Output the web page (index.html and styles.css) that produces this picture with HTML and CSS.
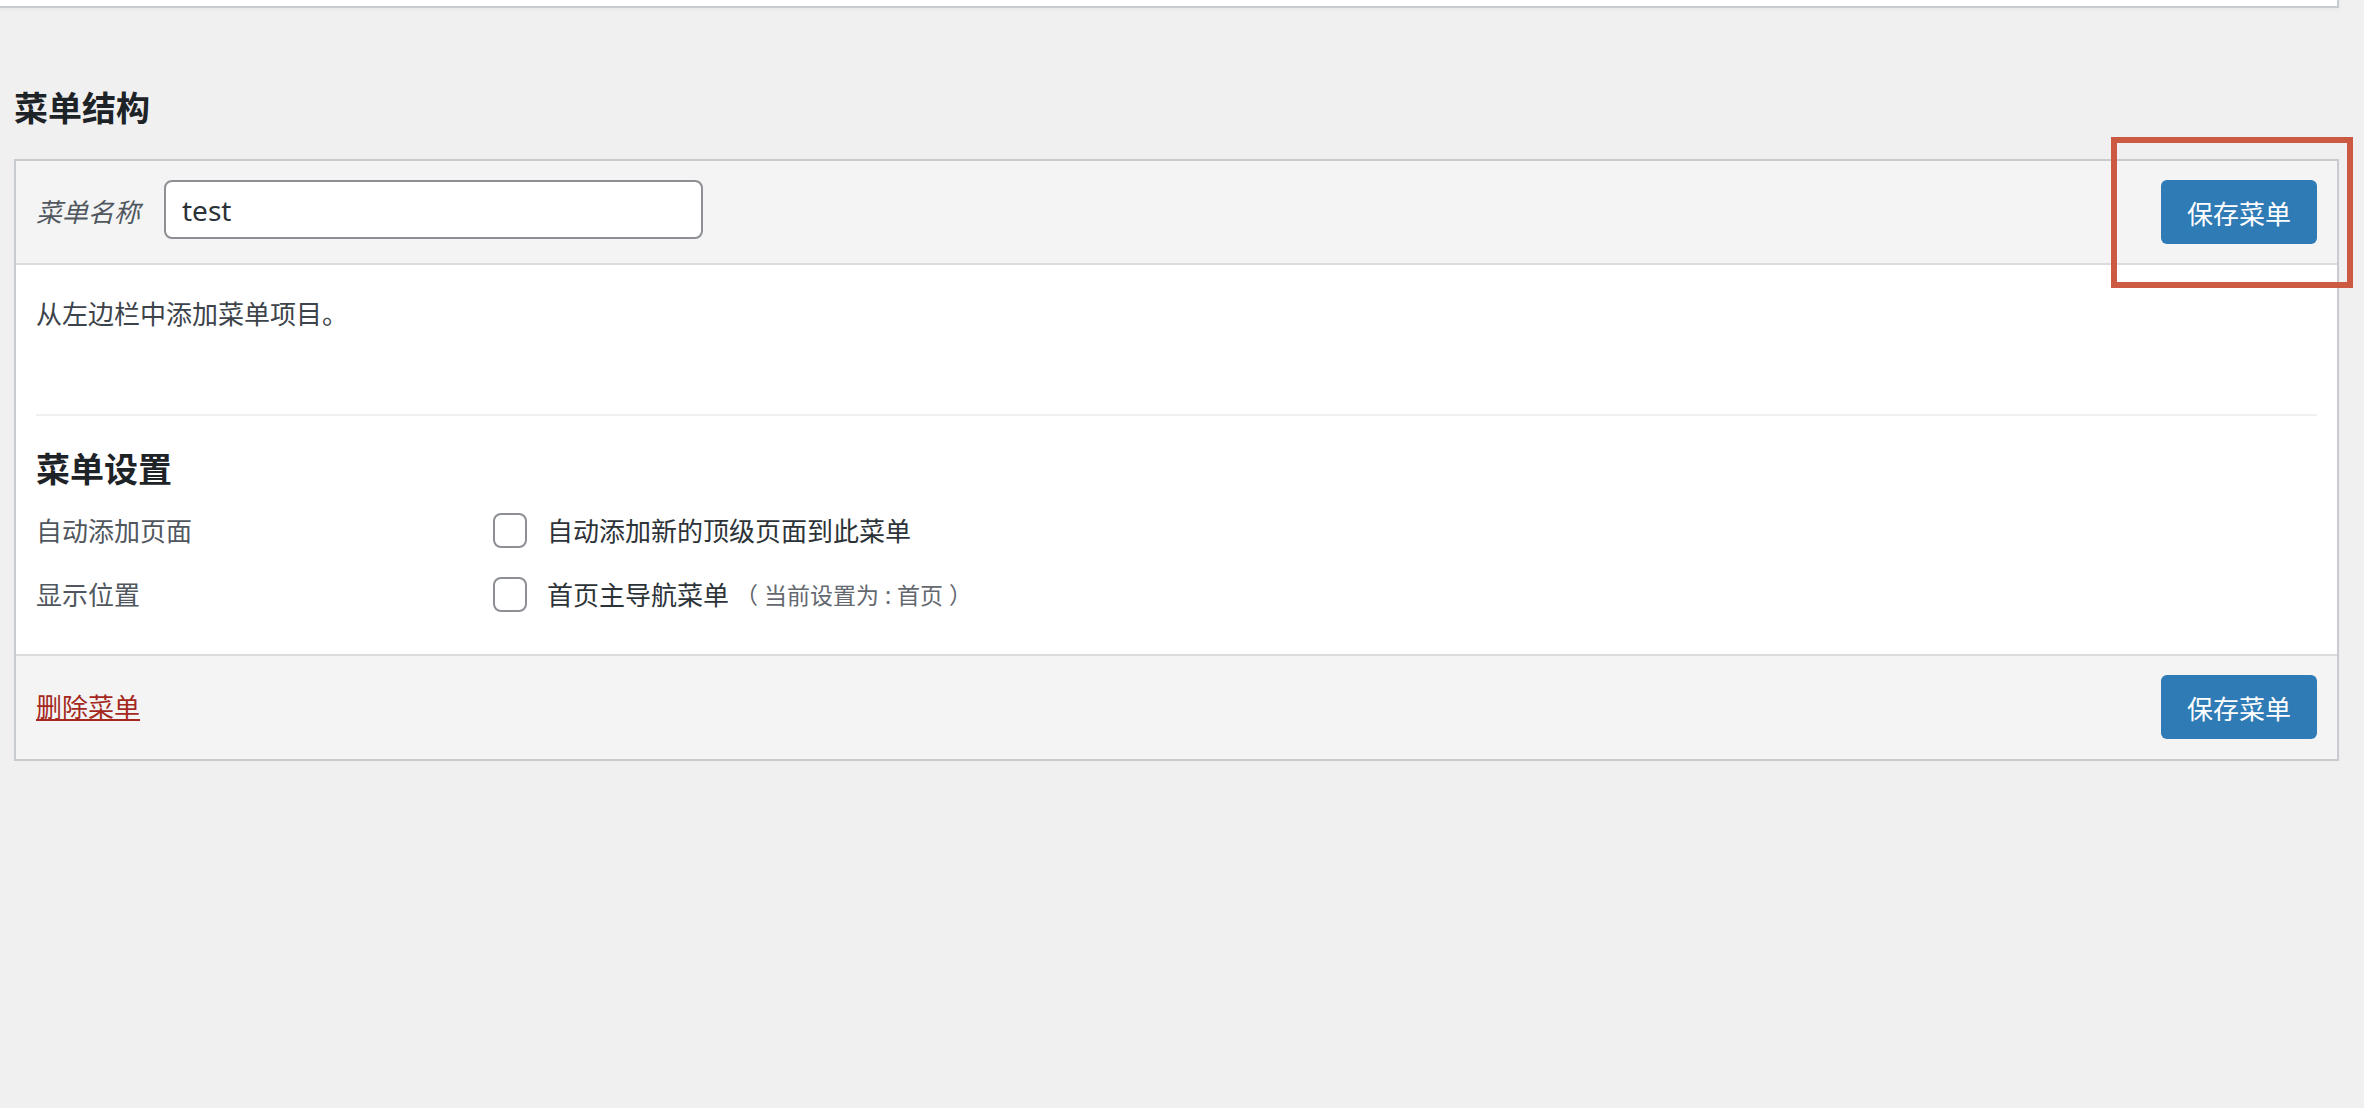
FILE: index.html
```html
<!DOCTYPE html>
<html lang="zh-CN">
    <head>
        <meta charset="utf-8">
        <title>菜单结构</title>
        <link rel="stylesheet" href="styles.css">
    </head>
    <body>
        <div class="page">
            <div class="top-panel"></div>

            <h2 class="section-title">菜单结构</h2>

            <div class="menu-box">
                <div class="menu-header">
                    <label class="name-label" for="menu-name">菜单名称</label>
                    <input type="text" id="menu-name" class="name-input" value="test">
                    <button class="btn-primary">保存菜单</button>
                </div>

                <div class="menu-body">
                    <p class="instructions">从左边栏中添加菜单项目。</p>

                    <div class="settings">
                        <h3 class="settings-title">菜单设置</h3>
                        <div class="setting-row">
                            <span class="setting-name">自动添加页面</span>
                            <label class="setting-check">
                                <input type="checkbox" class="checkbox">
                                自动添加新的顶级页面到此菜单
                            </label>
                        </div>
                        <div class="setting-row">
                            <span class="setting-name">显示位置</span>
                            <label class="setting-check">
                                <input type="checkbox" class="checkbox">
                                首页主导航菜单
                                <span class="location-set">（ 当前设置为 : 首页 ）</span>
                            </label>
                        </div>
                    </div>
                </div>

                <div class="menu-footer">
                    <a href="#" class="delete-link">删除菜单</a>
                    <button class="btn-primary">保存菜单</button>
                </div>
            </div>
        </div>

        <!-- markierung um den oberen button -->
        <div class="highlight"></div>
    </body>
</html>
```

FILE: styles.css
```css
:root {
    --bg-clr: #f0f0f1;
    --panel-clr: #f4f4f4;
    --border-clr: #c8ccd0;
    --inner-border-clr: #dcdcde;
    --text-clr: #3c434a;
    --heading-clr: #1d2327;
    --blue-clr: #2f7bb5;
    --red-clr: #a4281d;
}

body {
    margin: 0;
    background-color: var(--bg-clr);
    color: var(--text-clr);
    font-family: "Noto Sans", "Noto Sans CJK SC", sans-serif;
    font-size: 26px;
    line-height: 1.4;
}

.page {
    padding: 0 25px 0 14px;
}

.top-panel {
    height: 6px;
    margin-left: -14px;
    background: #fff;
    border-bottom: 2px solid var(--border-clr);
    border-right: 2px solid var(--border-clr);
    box-shadow: 0 2px 4px rgba(0, 0, 0, 0.04);
}

.section-title,
.settings-title {
    margin: 0;
    font-size: 34px;
    line-height: 44px;
    font-weight: 600;
    color: var(--heading-clr);
}

.section-title {
    margin-top: 78px;
    margin-bottom: 29px;
}

.menu-box {
    border: 2px solid var(--border-clr);
    background: #fff;
    box-shadow: 0 2px 2px rgba(0, 0, 0, 0.04);
}

.menu-header,
.menu-footer {
    display: flex;
    align-items: center;
    padding: 19px 20px;
    background: var(--panel-clr);
}

.menu-header {
    align-items: flex-start;
    border-bottom: 2px solid var(--inner-border-clr);
}

.menu-footer {
    border-top: 2px solid var(--inner-border-clr);
    justify-content: space-between;
    padding-bottom: 20px;
}

.name-label {
    font-style: italic;
    color: #50575e;
    margin-right: 24px;
    line-height: 64px;
}

.name-input {
    box-sizing: border-box;
    width: 539px;
    height: 59px;
    padding: 0 16px;
    border: 2px solid #8c8f94;
    border-radius: 8px;
    background: #fff;
    font-family: "Noto Sans", "Noto Sans CJK SC", sans-serif;
    font-size: 28px;
    color: #2c3338;
}

.btn-primary {
    margin-left: auto;
    height: 64px;
    padding: 0 26px;
    border: none;
    border-radius: 6px;
    background: var(--blue-clr);
    color: #fff;
    font-family: "Noto Sans CJK SC", sans-serif;
    font-size: 26px;
    cursor: pointer;
}

.menu-body {
    padding: 0 20px 42px;
}

.instructions {
    margin: 31px 0 0;
}

.settings {
    margin-top: 82px;
    border-top: 2px solid #f0f0f1;
    padding-top: 31px;
}

.setting-row {
    display: flex;
    align-items: center;
    height: 35px;
    margin-top: 29px;
}

.setting-row:first-of-type {
    margin-top: 22px;
}

.setting-name {
    width: 457px;
    color: #50575e;
}

.setting-check {
    display: flex;
    align-items: center;
    color: #2c3338;
}

.checkbox {
    appearance: none;
    box-sizing: border-box;
    width: 34px;
    height: 35px;
    margin: 0 20px 0 0;
    border: 2px solid #8c8f94;
    border-radius: 8px;
    background: #fff;
}

.location-set {
    margin-left: 6px;
    font-size: 23px;
    color: #646970;
}

.delete-link {
    color: var(--red-clr);
    text-decoration: underline;
}

.highlight {
    position: absolute;
    left: 2111px;
    top: 137px;
    width: 230px;
    height: 139px;
    border: 6px solid #cc5a43;
}
```
